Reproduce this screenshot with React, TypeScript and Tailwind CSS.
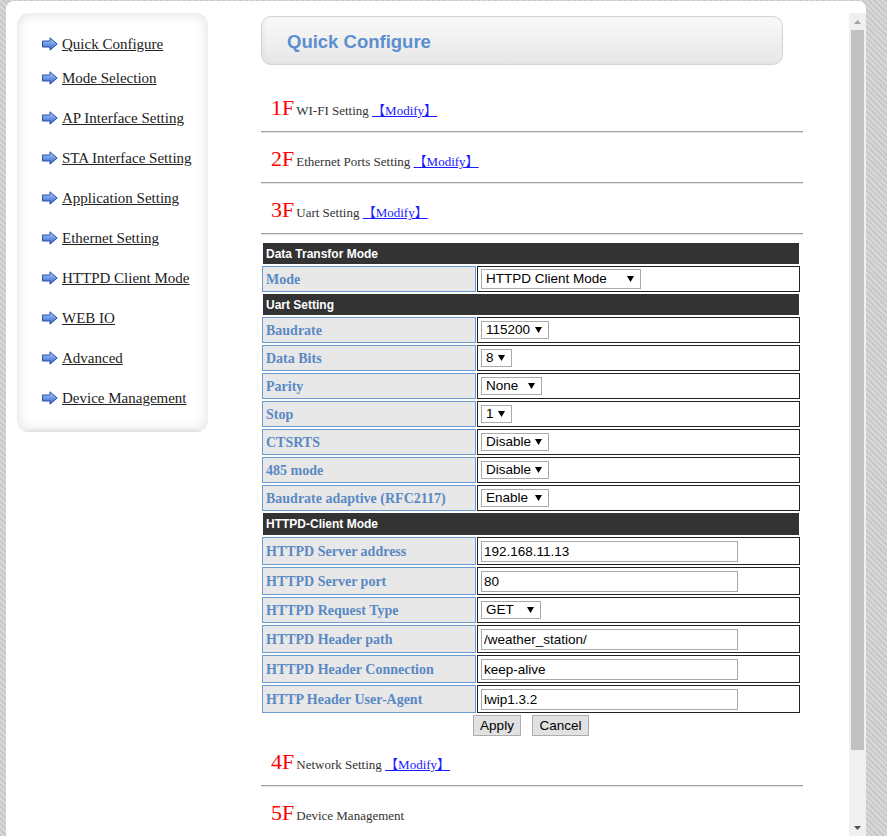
import React from 'react'

const navItems = [
  'Quick Configure',
  'Mode Selection',
  'AP Interface Setting',
  'STA Interface Setting',
  'Application Setting',
  'Ethernet Setting',
  'HTTPD Client Mode',
  'WEB IO',
  'Advanced',
  'Device Management',
]

const NavArrow = () => (
  <svg width="16" height="14" viewBox="0 0 16 14" className="shrink-0">
    <defs>
      <linearGradient id="navArrowFill" x1="0" y1="0" x2="0" y2="1">
        <stop offset="0" stopColor="#b4d0f7" />
        <stop offset="0.5" stopColor="#6f9ae6" />
        <stop offset="1" stopColor="#3563c9" />
      </linearGradient>
    </defs>
    <path d="M0.5 4 H8 V0.8 L15.2 7 L8 13.2 V10 H0.5 Z" fill="url(#navArrowFill)" stroke="#2a4fa6" strokeWidth="1" strokeLinejoin="round" />
  </svg>
)

const SelArrow = () => (
  <svg width="7" height="6" viewBox="0 0 7 6">
    <path d="M0 0 H7 L3.5 6 Z" fill="#000" />
  </svg>
)

type SelProps = { value: string; className: string }

const Select = ({ value, className }: SelProps) => (
  <div className={`flex items-center justify-between border border-[#a9a9a9] bg-white pl-[4px] pr-[6px] text-[13.5px] text-black font-['Liberation_Sans',sans-serif] ${className}`}>
    <span>{value}</span>
    <SelArrow />
  </div>
)

const TextInput = ({ value }: { value: string }) => (
  <input
    readOnly
    value={value}
    className="h-[21px] w-[257px] border border-[#a9a9a9] bg-white px-[2px] text-[13.5px] text-black outline-none font-['Liberation_Sans',sans-serif]"
  />
)

const Head = ({ title, h }: { title: string; h: string }) => (
  <div className={`${h} mx-[1px] flex items-center bg-[#333333] pl-[3px] text-[12px] font-bold text-white font-['Liberation_Sans',sans-serif]`}>
    {title}
  </div>
)

type RowProps = { label: string; h: string; children: React.ReactNode }

const Row = ({ label, h, children }: RowProps) => (
  <div className={`flex gap-[1px] ${h}`}>
    <div className="flex w-[214px] items-center border border-[#6d9bd1] bg-[#e8e8e8] pl-[3px] text-[14px] font-bold text-[#5a88c4]">
      {label}
    </div>
    <div className="flex flex-1 items-center border border-[#222] bg-white pl-[3px]">{children}</div>
  </div>
)

const Hr = () => <div className="h-[2px] border-t border-b border-t-[#a0a0a0] border-b-[#e4e4e4]" />

type SectionProps = { n: number; title: string; modify?: boolean }

const Section = ({ n, title, modify }: SectionProps) => (
  <>
    <div className="h-[49px] pl-[10px] pt-[15px] text-[22px] leading-[22px]">
      <span className="text-[#ff0000]">{n}F</span>
      <span className="ml-[2px] text-[13px] text-[#333]">{title}</span>
      {modify && (
        <>
          <span className="text-[13px]"> </span>
          <a href="#" className="text-[13px] text-[#1a1aff] underline font-['Liberation_Serif','Noto_Sans_CJK_SC',serif]">
            【Modify】
          </a>
        </>
      )}
    </div>
    <Hr />
  </>
)

const Sidebar = () => (
  <aside className="ml-[11px] flex h-[419px] w-[191px] flex-col overflow-hidden rounded-[12px] bg-white shadow-[inset_0_0_14px_rgba(0,0,0,0.13)]">
    <nav className="flex flex-col pt-[21px]">
      {navItems.map((item, i) => (
        <a
          key={item}
          href="#"
          className={`flex h-[20px] items-center pl-[25px] text-[15px] leading-[20px] text-[#222] underline ${i === 0 ? 'mb-[14px]' : 'mb-[20px]'}`}
        >
          <NavArrow />
          <span className="ml-[4px]">{item}</span>
        </a>
      ))}
    </nav>
    <div className="mt-auto h-[24px] bg-gradient-to-b from-[#f3f3f3] to-[#e0e0e0]" />
  </aside>
)

const Scrollbar = () => (
  <div className="ml-auto flex w-[17px] flex-col bg-[#f0f0f0]">
    <div className="flex h-[17px] items-center justify-center">
      <svg width="7" height="4" viewBox="0 0 7 4">
        <path d="M0 4 H7 L3.5 0 Z" fill="#a3a3a3" />
      </svg>
    </div>
    <div className="mx-[2px] h-[720px] bg-[#c1c1c1]" />
    <div className="flex-1" />
    <div className="flex h-[17px] items-center justify-center">
      <svg width="7" height="4" viewBox="0 0 7 4">
        <path d="M0 0 H7 L3.5 4 Z" fill="#505050" />
      </svg>
    </div>
  </div>
)

export default function App() {
  return (
    <div className="h-screen overflow-hidden bg-[#d0d0d0] bg-[repeating-linear-gradient(45deg,#c8c8c8_0px,#c8c8c8_2px,#d8d8d8_2px,#d8d8d8_4px)] pl-[6px] pt-[1px] font-['Liberation_Serif',serif]">
      <div className="flex h-full w-[860px] rounded-t-[8px] bg-white pt-[12px]">
        <Sidebar />
        <div className="flex flex-1">
          <main className="ml-[53px] w-[542px] pt-[3px]">
            <div className="flex h-[49px] w-[522px] items-center rounded-[10px] border border-[#d4d4d4] bg-gradient-to-b from-[#f9f9f9] to-[#e7e7e7] pl-[25px] pt-[2px] shadow-[inset_2px_0_4px_rgba(0,0,0,0.04)]">
              <h1 className="text-[18.5px] font-bold text-[#5b8fcf] font-['Liberation_Sans',sans-serif]">Quick Configure</h1>
            </div>

            <div className="mt-[17px]">
              <Section n={1} title="WI-FI Setting" modify />
              <Section n={2} title="Ethernet Ports Setting" modify />
              <Section n={3} title="Uart Setting" modify />
            </div>

            <div className="ml-[1px] mt-[8px] flex w-[538px] flex-col gap-[2px]">
              <Head title="Data Transfor Mode" h="h-[21px]" />
              <Row label="Mode" h="h-[26px]">
                <Select value="HTTPD Client Mode" className="h-[20px] w-[160px]" />
              </Row>
              <Head title="Uart Setting" h="h-[21px]" />
              <Row label="Baudrate" h="h-[26px]">
                <Select value="115200" className="h-[18px] w-[68px]" />
              </Row>
              <Row label="Data Bits" h="h-[26px]">
                <Select value="8" className="h-[18px] w-[31px]" />
              </Row>
              <Row label="Parity" h="h-[26px]">
                <Select value="None" className="h-[18px] w-[61px]" />
              </Row>
              <Row label="Stop" h="h-[26px]">
                <Select value="1" className="h-[18px] w-[31px]" />
              </Row>
              <Row label="CTSRTS" h="h-[26px]">
                <Select value="Disable" className="h-[18px] w-[68px]" />
              </Row>
              <Row label="485 mode" h="h-[26px]">
                <Select value="Disable" className="h-[18px] w-[68px]" />
              </Row>
              <Row label="Baudrate adaptive (RFC2117)" h="h-[26px]">
                <Select value="Enable" className="h-[18px] w-[68px]" />
              </Row>
              <Head title="HTTPD-Client Mode" h="h-[22px]" />
              <Row label="HTTPD Server address" h="h-[28px]">
                <TextInput value="192.168.11.13" />
              </Row>
              <Row label="HTTPD Server port" h="h-[28px]">
                <TextInput value="80" />
              </Row>
              <Row label="HTTPD Request Type" h="h-[26px]">
                <Select value="GET" className="h-[18px] w-[60px]" />
              </Row>
              <Row label="HTTPD Header path" h="h-[28px]">
                <TextInput value="/weather_station/" />
              </Row>
              <Row label="HTTPD Header Connection" h="h-[28px]">
                <TextInput value="keep-alive" />
              </Row>
              <Row label="HTTP Header User-Agent" h="h-[28px]">
                <TextInput value="lwip1.3.2" />
              </Row>
              <div className="flex justify-center gap-[11px]">
                <button className="h-[21px] w-[48px] border border-[#adadad] bg-[#e1e1e1] text-[13.5px] text-black font-['Liberation_Sans',sans-serif]">Apply</button>
                <button className="h-[21px] w-[57px] border border-[#adadad] bg-[#e1e1e1] text-[13.5px] text-black font-['Liberation_Sans',sans-serif]">Cancel</button>
              </div>
            </div>

            <Section n={4} title="Network Setting" modify />
            <Section n={5} title="Device Management" />
          </main>
          <Scrollbar />
        </div>
      </div>
    </div>
  )
}
